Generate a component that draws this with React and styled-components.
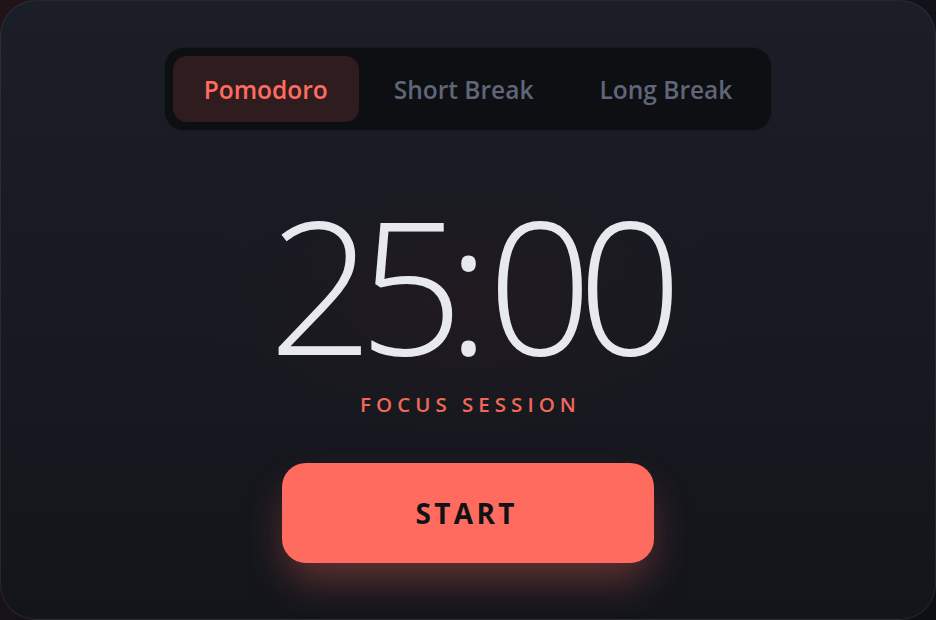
import React, { useState } from "react";
import styled, { createGlobalStyle } from "styled-components";

const Global = createGlobalStyle`
  html, body { margin: 0; padding: 0; height: 100%; }
  body {
    background: linear-gradient(135deg, #201418 0%, #15121a 50%, #0e0f14 100%);
    font-family: "Open Sans", "Noto Sans", sans-serif;
    overflow: hidden;
  }
  #root { height: 100%; }
`;

const Card = styled.div`
  box-sizing: border-box;
  width: 936px;
  height: 620px;
  border-radius: 36px;
  border: 1px solid rgba(255, 255, 255, 0.08);
  background: linear-gradient(180deg, #1b1e27 0%, #171920 60%, #13151b 100%);
  display: flex;
  flex-direction: column;
  align-items: center;
  padding-top: 46px;
`;

const Tabs = styled.div`
  display: flex;
  gap: 4px;
  padding: 8px;
  border-radius: 20px;
  background: #0e0f13;
  border: 1px solid rgba(255, 255, 255, 0.04);
`;

const Tab = styled.button`
  height: 66px;
  padding: 0 31px;
  border: none;
  border-radius: 14px;
  font-family: "Open Sans", "Noto Sans", sans-serif;
  font-size: 24.5px;
  font-weight: 600;
  cursor: pointer;
  background: ${(p) => (p.$active ? "#2f1c1f" : "transparent")};
  color: ${(p) => (p.$active ? "#ff6b5e" : "#5f6678")};
`;

const TimerArea = styled.div`
  margin-top: 31px;
  width: 520px;
  padding: 30px 0 24px;
  border-radius: 60px;
  background: radial-gradient(ellipse at center, rgba(40, 26, 32, 0.55) 0%, rgba(30, 24, 30, 0.25) 55%, rgba(0,0,0,0) 75%);
  display: flex;
  flex-direction: column;
  align-items: center;
`;

const Time = styled.div`
  display: flex;
  align-items: baseline;
  font-family: "Open Sans", sans-serif;
  font-weight: 300;
  font-size: 184px;
  line-height: 184px;
  height: 184px;
  color: #e8e9ef;
`;

const Digits = styled.span`
  letter-spacing: -15px;
`;

const Colon = styled.span`
  margin: 0 -3px 0 -2px;
`;

const Label = styled.div`
  margin-top: 16px;
  font-family: "Open Sans", sans-serif;
  font-size: 20.5px;
  line-height: 25px;
  font-weight: 600;
  letter-spacing: 0.245em;
  padding-left: 0.245em;
  color: #f2675a;
`;

const StartButton = styled.button`
  margin-top: 22px;
  width: 372px;
  height: 100px;
  border: none;
  border-radius: 24px;
  background: #ff6b5e;
  color: #111216;
  font-family: "Open Sans", sans-serif;
  font-weight: 700;
  font-size: 28px;
  letter-spacing: 0.12em;
  padding-left: 0.12em;
  cursor: pointer;
  box-shadow: 0 22px 40px -6px rgba(255, 107, 94, 0.35);
`;

const modes = ["Pomodoro", "Short Break", "Long Break"];

export default function App() {
  const [mode, setMode] = useState(0);
  return (
    <>
      <Global />
      <Card>
        <Tabs>
          {modes.map((m, i) => (
            <Tab key={m} $active={i === mode} onClick={() => setMode(i)}>
              {m}
            </Tab>
          ))}
        </Tabs>
        <TimerArea>
          <Time>
            <Digits>25</Digits>
            <Colon>:</Colon>
            <Digits>00</Digits>
          </Time>
          <Label>FOCUS SESSION</Label>
        </TimerArea>
        <StartButton>START</StartButton>
      </Card>
    </>
  );
}
